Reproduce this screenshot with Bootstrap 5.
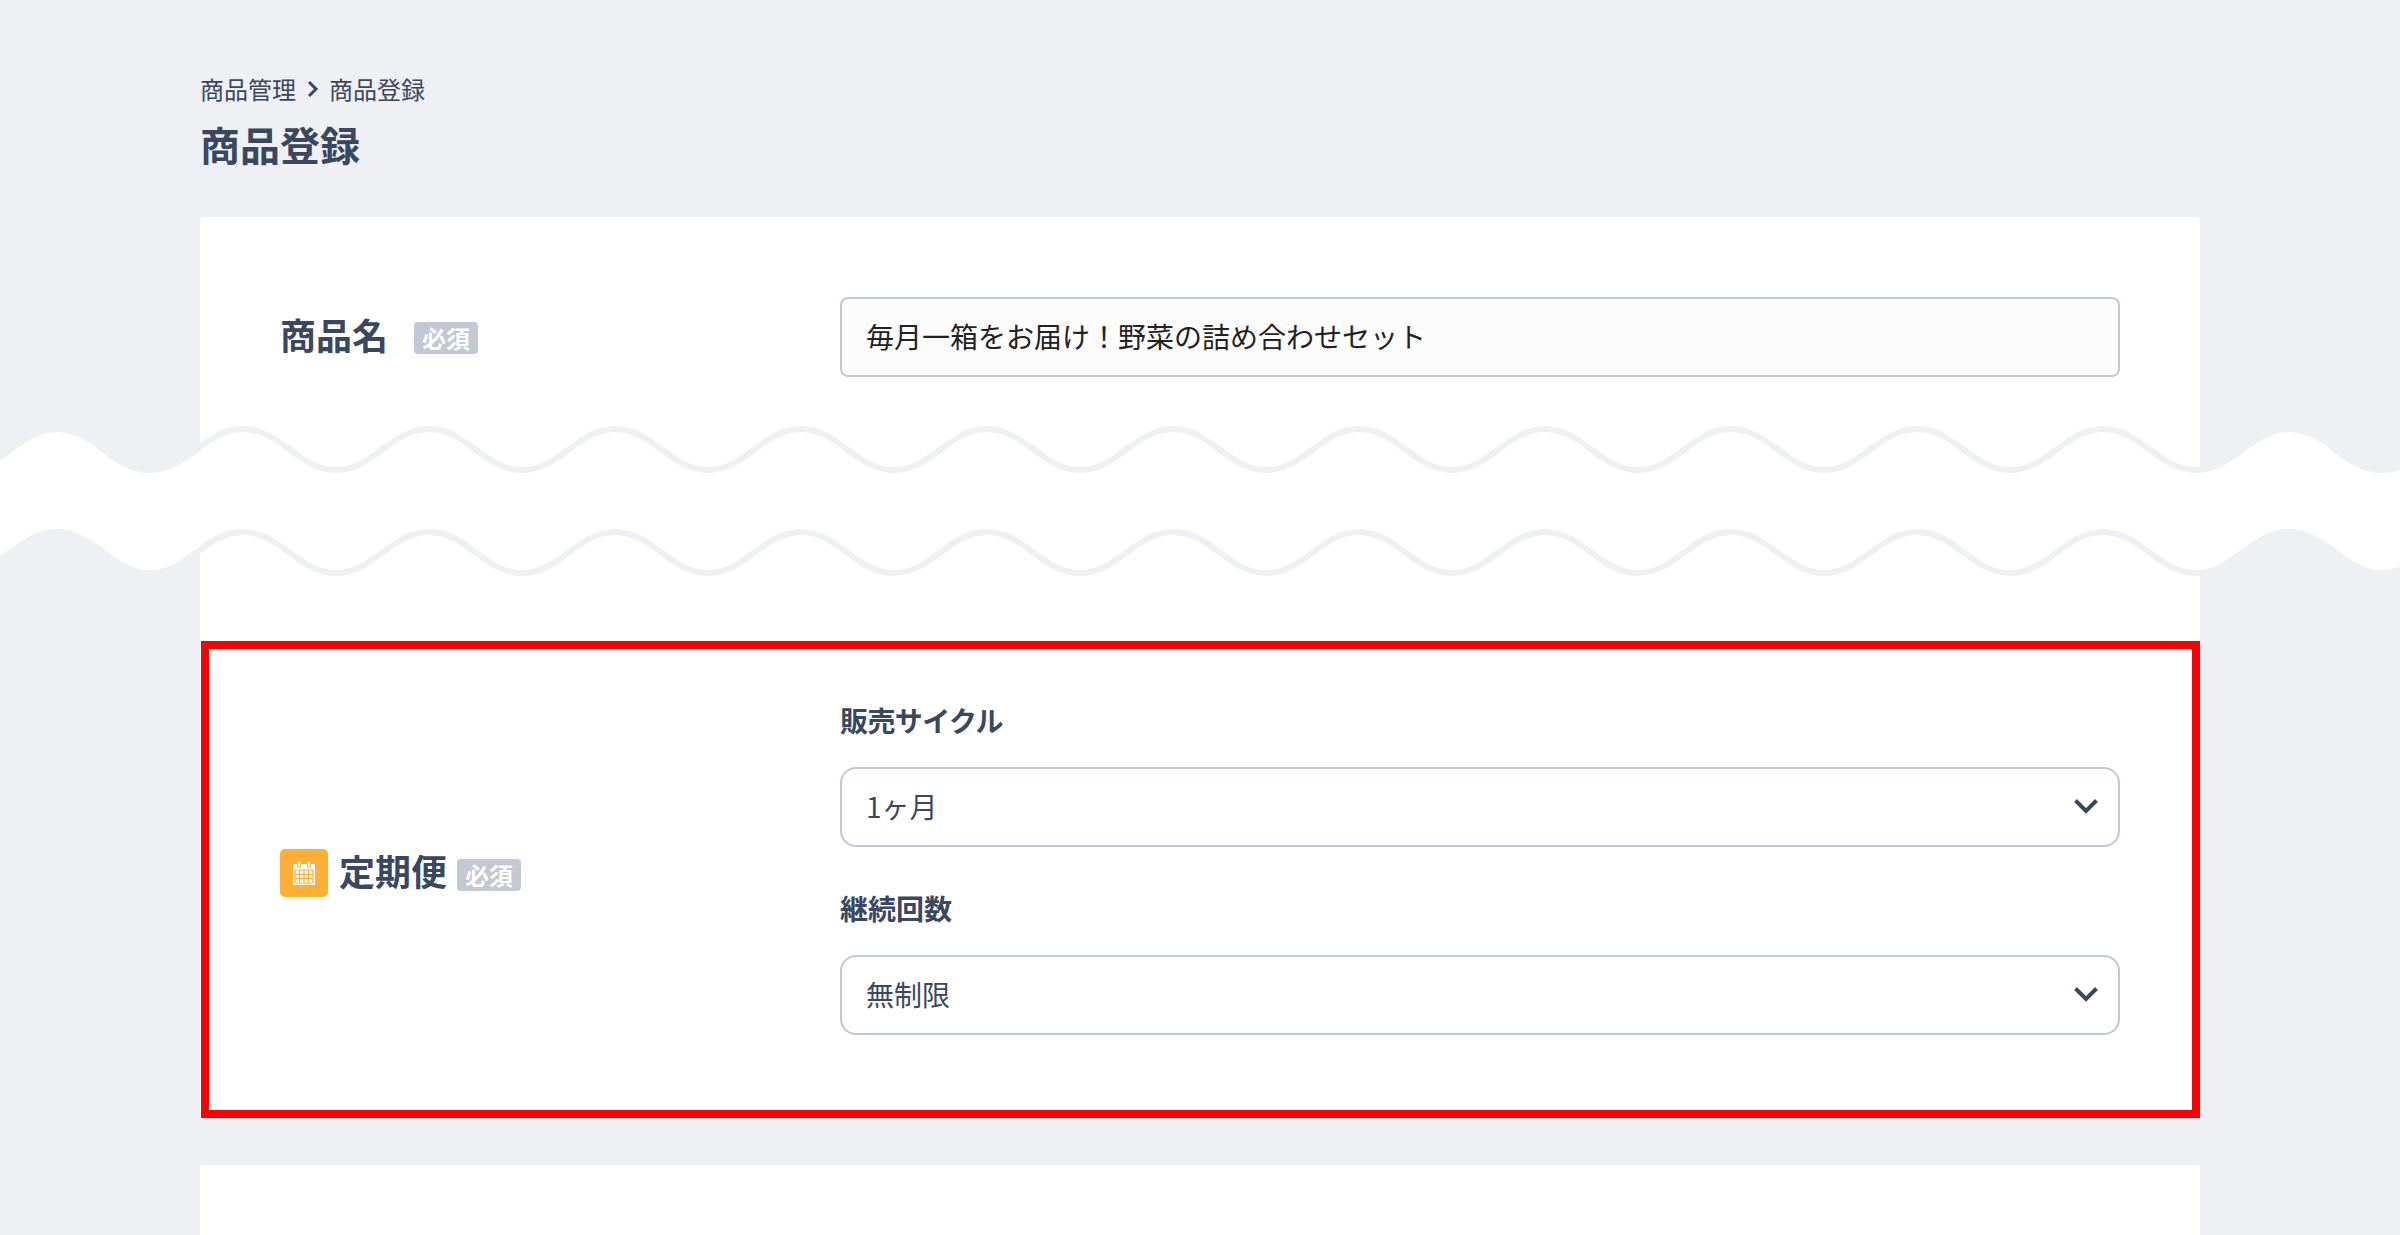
<!DOCTYPE html>
<html lang="ja">
<head>
<meta charset="utf-8">
<title>商品登録</title>
<link rel="stylesheet" href="https://cdn.jsdelivr.net/npm/bootstrap@5.3.0/dist/css/bootstrap.min.css">
<style>
body{background:#eff0f4;color:#3a4760;font-family:"Noto Sans CJK JP","Liberation Sans",sans-serif;position:relative}
.page-wrap{width:2000px;margin:0 auto;padding-top:71px}
.crumbs{font-size:24px;line-height:36px;margin:0;gap:10.500px;align-items:center}
.crumb-arrow{width:12px;height:18px;display:block}
.page-title{font-size:40px;font-weight:700;line-height:60px;margin:7px 0 0;color:#3a4760}
.sheet{margin-top:43px;background:#fff;border:0;border-radius:4px 4px 0 0;--bs-card-border-width:0}
.sheet-lower{margin-top:47px;height:120px;border-radius:4px}
.name-section{padding:80px 80px 264px}
.left-col{width:560px;flex:none}
.field-title{font-size:36px;font-weight:700;line-height:48px;margin:0 0 6px;color:#3a4760}
.req-tag{--bs-badge-padding-x:8px;--bs-badge-padding-y:0;--bs-badge-font-size:24px;--bs-badge-font-weight:700;--bs-badge-color:#fff;--bs-badge-border-radius:4px;background:#c2c8d4;line-height:32px;height:32px;width:64px;display:block}
.name-tag{margin-left:26px;margin-top:2px}
.deli-tag{margin-left:10px;margin-top:3px}
.text-input,.text-input:focus{height:80px;border:2px solid #c2c8d4;border-radius:8px;background:#fdfcfd;font-size:28px;line-height:40px;padding:0 24px 3px;color:#222;box-shadow:none}
.select-input,.select-input:focus{height:80px;border:2px solid #c2c8d4;border-radius:16px;font-size:28px;line-height:40px;padding:0 64px 2px 24px;color:#3a4760;box-shadow:none;background-color:#fff;background-position:right 18px center;background-size:28px 18px;background-image:url("data:image/svg+xml,%3Csvg xmlns='http://www.w3.org/2000/svg' viewBox='0 0 28 18'%3E%3Cpath d='M3.500 2.500 14 13 24.500 2.500' fill='none' stroke='%233a4760' stroke-width='4'/%3E%3C/svg%3E")}
.field-label{font-size:28px;font-weight:700;line-height:40px;margin:0 0 27px;color:#3a4760;display:block}
.kana-tight{letter-spacing:-.6px}
.field-stack{gap:41px}
.delivery-box{border:8px solid #f00;margin-left:1px;padding:51px 72px 75px 71px}
.cal-box{width:48px;height:48px;background:#ffaf36;border-radius:5px;margin-right:11px}
.delivery-left{padding-top:11px}
.wave-band{position:absolute;left:0;top:420px;width:2400px;height:170px;display:block;pointer-events:none}
</style>
</head>
<body class="vh-100 overflow-hidden">
<div class="page-wrap">
  <nav aria-label="breadcrumb" class="crumbs d-flex">
    <span>商品管理</span>
    <svg class="crumb-arrow" viewBox="0 0 12 18"><path d="M2 2 9 9 2 16" fill="none" stroke="#3a4760" stroke-width="3"/></svg>
    <span>商品登録</span>
  </nav>
  <h1 class="page-title">商品登録</h1>

  <div class="card sheet">
    <section class="name-section d-flex align-items-center">
      <div class="left-col d-flex align-items-center">
        <h2 class="field-title">商品名</h2>
        <span class="badge req-tag name-tag">必須</span>
      </div>
      <input class="form-control text-input flex-grow-1" type="text" value="毎月一箱をお届け！野菜の詰め合わせセット" aria-label="商品名">
    </section>

    <section class="delivery-box d-flex align-items-center">
      <div class="left-col d-flex align-items-center delivery-left">
        <span class="cal-box d-flex align-items-center justify-content-center">
          <svg width="24" height="26" viewBox="0 0 24 26">
            <rect x="1" y="4" width="22" height="21" fill="#fff"/>
            <rect x="5.500" y="1" width="3" height="6.500" rx="1.500" fill="#fff" stroke="#ffaf36" stroke-width="1"/>
            <rect x="15.500" y="1" width="3" height="6.500" rx="1.500" fill="#fff" stroke="#ffaf36" stroke-width="1"/>
            <path d="M3 10h18v13H3zM3 14.300h18M3 18.600h18M7.500 10v13M12 10v13M16.500 10v13" fill="none" stroke="#ffaf36" stroke-width="1.200"/>
          </svg>
        </span>
        <h2 class="field-title">定期便</h2>
        <span class="badge req-tag deli-tag">必須</span>
      </div>
      <div class="flex-grow-1 d-flex flex-column field-stack">
        <div>
          <label class="field-label kana-tight form-label" for="cycle">販売サイクル</label>
          <select class="form-select select-input" id="cycle"><option>1ヶ月</option></select>
        </div>
        <div>
          <label class="field-label form-label" for="count">継続回数</label>
          <select class="form-select select-input" id="count"><option>無制限</option></select>
        </div>
      </div>
    </section>
  </div>

  <div class="card sheet sheet-lower"></div>
</div>

<svg class="wave-band" viewBox="0 0 2400 170" aria-hidden="true">
  <defs>
    <path id="waveTop" d="M-36 50c38 0 55-41 93-41s55 41 93 41s55-41 93-41s55 41 93 41s55-41 93-41s55 41 93 41s55-41 93-41s55 41 93 41s55-41 93-41s55 41 93 41s55-41 93-41s55 41 93 41s55-41 93-41s55 41 93 41s55-41 93-41s55 41 93 41s55-41 93-41s55 41 93 41s55-41 93-41s55 41 93 41s55-41 93-41s55 41 93 41s55-41 93-41s55 41 93 41s55-41 93-41s55 41 93 41s55-41 93-41s55 41 93 41s55-41 93-41s55 41 93 41"/>
  </defs>
  <path fill="#fff" d="M-36 53c38 0 55-41 93-41s55 41 93 41s55-41 93-41s55 41 93 41s55-41 93-41s55 41 93 41s55-41 93-41s55 41 93 41s55-41 93-41s55 41 93 41s55-41 93-41s55 41 93 41s55-41 93-41s55 41 93 41s55-41 93-41s55 41 93 41s55-41 93-41s55 41 93 41s55-41 93-41s55 41 93 41s55-41 93-41s55 41 93 41s55-41 93-41s55 41 93 41s55-41 93-41s55 41 93 41s55-41 93-41s55 41 93 41V109H-36z"/>
  <path fill="#fff" d="M-36 151c38 0 55-42 93-42s55 42 93 42s55-42 93-42s55 42 93 42s55-42 93-42s55 42 93 42s55-42 93-42s55 42 93 42s55-42 93-42s55 42 93 42s55-42 93-42s55 42 93 42s55-42 93-42s55 42 93 42s55-42 93-42s55 42 93 42s55-42 93-42s55 42 93 42s55-42 93-42s55 42 93 42s55-42 93-42s55 42 93 42s55-42 93-42s55 42 93 42s55-42 93-42s55 42 93 42s55-42 93-42s55 42 93 42V60H-36z"/>
  <use href="#waveTop" fill="none" stroke="#eff0f4" stroke-width="6"/>
  <use href="#waveTop" y="103" fill="none" stroke="#eff0f4" stroke-width="6"/>
</svg>
</body>
</html>
